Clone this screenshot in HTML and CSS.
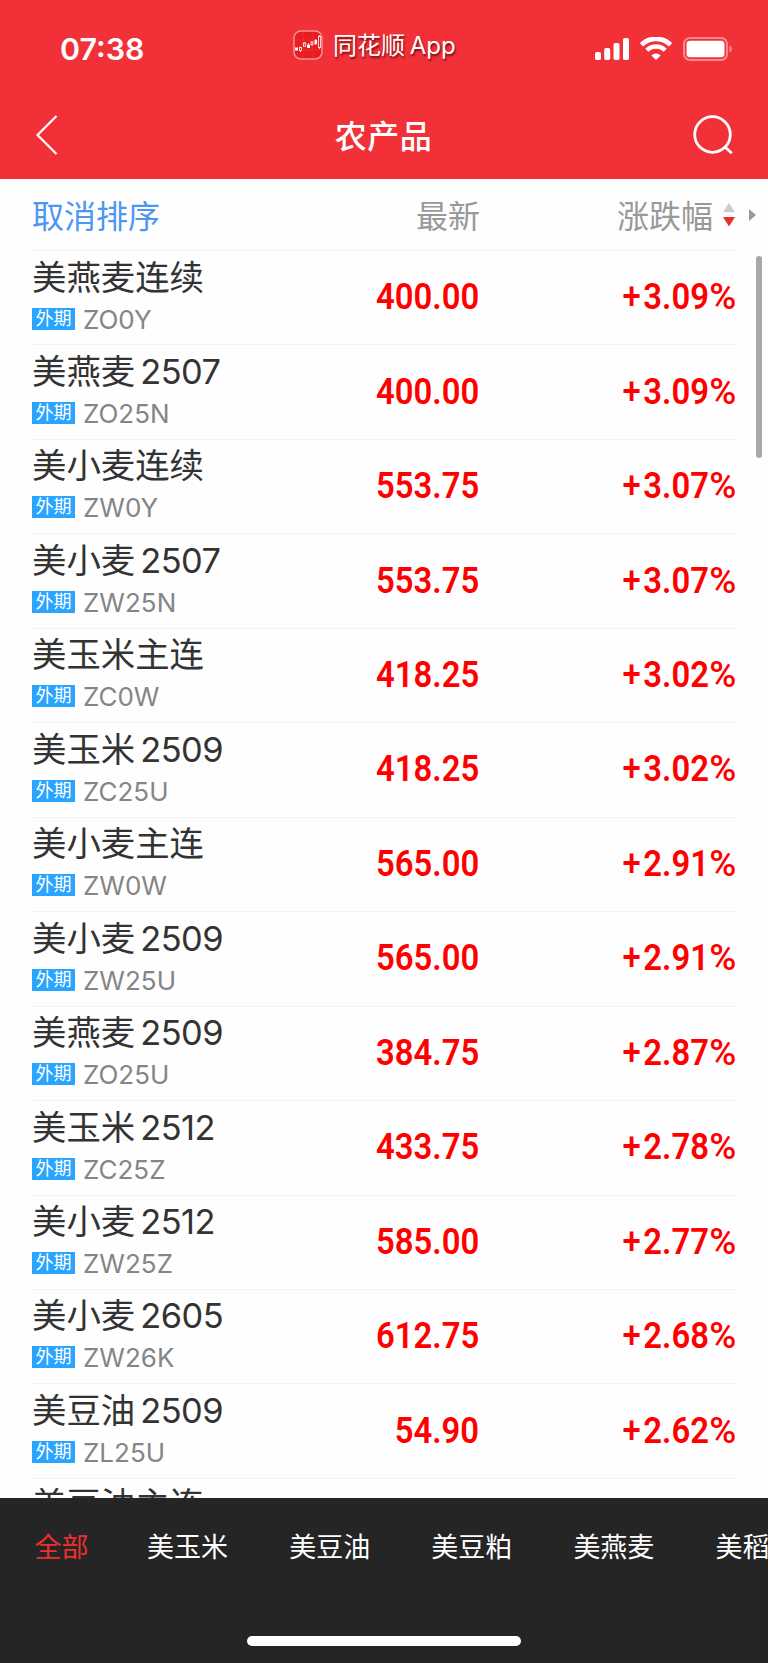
FILE: index.html
```html
<!DOCTYPE html>
<html lang="zh-CN">
<head>
    <meta charset="UTF-8">
    <title>农产品</title>
    <link rel="stylesheet" href="styles.css">
</head>
<body>
    <header class="header">
        <div class="status-bar">
            <span class="time">07:38</span>
            <div class="app-name">
                <svg class="app-logo" width="30" height="30" viewBox="0 0 30 30">
                    <rect x="1" y="1" width="28" height="28" rx="7" fill="#e81c22" stroke="#f79094" stroke-width="1.5"/>
                    <path d="M2 10h26M2 20h26M10 2v26M20 2v26" stroke="#f03a3e" stroke-width=".5"/>
                    <g fill="#fff">
                        <rect x="2" y="17.5" width="3" height="3"/>
                        <rect x="14" y="14.5" width="3" height="3.5"/>
                        <rect x="21.5" y="10" width="2.6" height="4"/>
                    </g>
                    <g fill="none" stroke="#fff" stroke-width=".8">
                        <rect x="6.5" y="17.5" width="2" height="3"/>
                        <rect x="10.5" y="13" width="2.2" height="3.2"/>
                        <rect x="18" y="12" width="2" height="2.5"/>
                        <rect x="25.4" y="6.5" width="2.2" height="11"/>
                        <path d="M7.5 16.5v1M7.5 20.5v1.5M11.6 12v1M15.5 13v1.5M19 11v1M19 14.5v1.5M22.8 9v6M26.5 5v1.5M26.5 17.5v1.5"/>
                    </g>
                </svg>
                <span class="app-title">同花顺 <span class="latin">App</span></span>
            </div>
            <div class="status-icons">
                <svg width="34" height="24" viewBox="0 0 34 24" fill="#fff">
                    <rect x="0" y="15" width="6" height="8" rx="1.8"/>
                    <rect x="9.2" y="11" width="6" height="12" rx="1.8"/>
                    <rect x="18.5" y="6" width="6" height="17" rx="1.8"/>
                    <rect x="28" y="1" width="6" height="22" rx="1.8"/>
                </svg>
                <svg width="32" height="24" viewBox="0 0 32 24" fill="none" stroke="#fff">
                    <path d="M1.5 7.8a20.8 20.8 0 0 1 29 0" stroke-width="4.8"/>
                    <path d="M6.8 13.3a13.1 13.1 0 0 1 18.4 0" stroke-width="4.4"/>
                    <path d="M11.3 18.4a6.7 6.7 0 0 1 9.4 0L16 23z" fill="#fff" stroke="none"/>
                </svg>
                <svg width="50" height="24" viewBox="0 0 50 24">
                    <rect x="1" y="1" width="43" height="22" rx="6" fill="none" stroke="#f88a8e" stroke-width="2"/>
                    <rect x="3.5" y="3.7" width="38" height="16.5" rx="3.5" fill="#fff"/>
                    <path d="M46.3 8.5c3.6 1 3.6 6 0 7z" fill="#f88a8e"/>
                </svg>
            </div>
        </div>
        <div class="nav-bar">
            <svg class="back" width="22" height="40" viewBox="0 0 22 40" fill="none" stroke="#fff" stroke-width="2.2">
                <path d="M20.5 1L1.5 20l19 19"/>
            </svg>
            <h1>农产品</h1>
            <svg class="search" width="40" height="40" viewBox="0 0 40 40" fill="none" stroke="#fff" stroke-width="2.8">
                <circle cx="19.5" cy="19.5" r="17.8"/>
                <path d="M31.5 31.5l7.3 6.8"/>
            </svg>
        </div>
    </header>

    <div class="table-head">
        <span class="cancel-sort">取消排序</span>
        <span class="col-price">最新</span>
        <span class="col-change">涨跌幅</span>
        <svg class="sort-arrows" width="12" height="24" viewBox="0 0 12 24">
            <path d="M6 0l6 9.3H0z" fill="#ccc"/>
            <path d="M6 23.5L0 14h12z" fill="#e93030"/>
        </svg>
        <svg class="more-arrow" width="7" height="12" viewBox="0 0 7 12">
            <path d="M0 0l7 6-7 6z" fill="#999"/>
        </svg>
    </div>

    <main class="list-wrap">
        <div class="list" id="list"></div>
        <div class="scrollbar"></div>
    </main>

    <footer class="footer">
        <nav class="tabs">
            <span class="active">全部</span>
            <span>美玉米</span>
            <span>美豆油</span>
            <span>美豆粕</span>
            <span>美燕麦</span>
            <span>美稻谷</span>
        </nav>
        <div class="home-indicator"></div>
    </footer>

    <script>
        const quotes = [
            ['美燕麦连续', '', 'ZO0Y', '400.00', '3.09'],
            ['美燕麦', '2507', 'ZO25N', '400.00', '3.09'],
            ['美小麦连续', '', 'ZW0Y', '553.75', '3.07'],
            ['美小麦', '2507', 'ZW25N', '553.75', '3.07'],
            ['美玉米主连', '', 'ZC0W', '418.25', '3.02'],
            ['美玉米', '2509', 'ZC25U', '418.25', '3.02'],
            ['美小麦主连', '', 'ZW0W', '565.00', '2.91'],
            ['美小麦', '2509', 'ZW25U', '565.00', '2.91'],
            ['美燕麦', '2509', 'ZO25U', '384.75', '2.87'],
            ['美玉米', '2512', 'ZC25Z', '433.75', '2.78'],
            ['美小麦', '2512', 'ZW25Z', '585.00', '2.77'],
            ['美小麦', '2605', 'ZW26K', '612.75', '2.68'],
            ['美豆油', '2509', 'ZL25U', '54.90', '2.62'],
            ['美豆油主连', '', '', '', '']
        ];

        document.getElementById('list').innerHTML = quotes.map(([name, month, code, price, change]) => `
            <div class="row">
                <div class="contract">
                    <div class="name">${name}${month ? `<span class="month">${month}</span>` : ''}</div>
                    ${code ? `<div class="meta"><span class="tag">外期</span><span class="code">${code}</span></div>` : ''}
                </div>
                <div class="price"><span class="num">${price}</span></div>
                <div class="change">${change ? `<span class="num"><span class="sign">+</span>${change}<span class="percent">%</span></span>` : ''}</div>
            </div>
        `).join('');
    </script>
</body>
</html>
```
FILE: styles.css
```css
* {
    box-sizing: border-box;
}

body {
    margin: 0;
    height: 1663px;
    overflow: hidden;
    display: flex;
    flex-direction: column;
    background: #fefefe;
    font-family: Inter, "Noto Sans CJK SC", sans-serif;
}

svg {
    display: block;
    flex: none;
}

.header {
    height: 179px;
    flex: none;
    background: #f23038;
    color: #fff;
}

.status-bar {
    height: 95px;
    padding: 0 35px 0 60px;
    display: grid;
    grid-template-columns: 233px 1fr auto;
    align-items: center;
}

.time {
    font-size: 30.4px;
    font-weight: 600;
    padding-top: 3px;
}

.app-name {
    display: flex;
    align-items: center;
    gap: 10px;
    padding-bottom: 6px;
}

.app-title {
    font-size: 24px;
    line-height: 30px;
    padding-top: 2px;
    text-shadow: 1px 2px 2px rgba(70, 0, 0, 0.7);
}

.app-title .latin {
    margin-left: -2px;
}

.status-icons {
    display: flex;
    align-items: center;
    gap: 11px;
    padding-top: 3px;
}

.nav-bar {
    height: 84px;
    padding: 0 35px 4px 36px;
    display: flex;
    align-items: center;
    justify-content: space-between;
}

.nav-bar h1 {
    margin: 4px 0 0 16px;
    font-size: 32px;
    font-weight: 500;
    line-height: 40px;
    letter-spacing: 0.5px;
}

.table-head {
    height: 72px;
    flex: none;
    margin-left: 32px;
    padding-right: 9px;
    display: flex;
    align-items: center;
    font-size: 32px;
    line-height: 40px;
    color: #999;
    background: linear-gradient(#f5f5f5, #f5f5f5) 0 100% / 704px 1px no-repeat;
}

.table-head span {
    padding-top: 3px;
}

.cancel-sort {
    width: 248px;
    color: #4d97f2;
}

.col-price {
    width: 200px;
    text-align: right;
}

.col-change {
    width: 233px;
    text-align: right;
}

.sort-arrows {
    margin-left: 10px;
}

.more-arrow {
    margin-left: 14px;
}

.list-wrap {
    flex: 1;
    min-height: 0;
    overflow: hidden;
    position: relative;
}

.list {
    margin: 0 32px;
}

.row {
    height: 94.46px;
    display: flex;
    align-items: center;
    border-bottom: 1px solid #f5f5f5;
}

.contract {
    width: 248px;
    align-self: flex-start;
    padding-top: 4.5px;
}

.name {
    font-size: 34.4px;
    line-height: 44px;
    color: #333;
    white-space: nowrap;
}

.month {
    margin-left: 5px;
    font-size: 34.4px;
    font-weight: 380;
    letter-spacing: -0.5px;
}

.meta {
    display: flex;
    align-items: center;
    margin-top: 8px;
    height: 24px;
}

.tag {
    width: 43px;
    height: 22px;
    margin-bottom: 2px;
    background: #29a4ff;
    color: #fff;
    font-size: 18px;
    line-height: 21px;
    text-align: center;
}

.code {
    margin-left: 8px;
    font-size: 26px;
    font-weight: 380;
    line-height: 24px;
    letter-spacing: 0;
    color: #858585;
}

.price {
    width: 199px;
    text-align: right;
}

.change {
    flex: 1;
    text-align: right;
}

/* condensed look for the quote figures */
.num {
    display: inline-block;
    margin-top: -1px;
    font-family: Roboto, sans-serif;
    font-size: 37px;
    font-weight: 600;
    line-height: 44px;
    color: #f00;
    transform: scaleX(0.888);
    transform-origin: right;
}

.change .num {
    margin-right: -1px;
}

.sign {
    margin-right: 3px;
    font-weight: 500;
}

.percent {
    display: inline-block;
    margin-left: 4px;
    font-weight: 500;
    transform: scaleX(1.12);
    transform-origin: right;
}

.scrollbar {
    position: absolute;
    top: 5px;
    right: 6px;
    width: 6px;
    height: 202px;
    border-radius: 3px;
    background: #a8a8a8;
}

.footer {
    height: 165px;
    flex: none;
    display: flex;
    flex-direction: column;
    justify-content: space-between;
    align-items: center;
    padding-bottom: 17px;
    background: #252525;
    overflow: hidden;
}

.tabs {
    width: 100%;
    height: 99px;
    padding: 1px 0 0 34.5px;
    display: flex;
    align-items: center;
    gap: 61.1px;
    font-size: 27px;
    line-height: 36px;
    color: #fff;
    white-space: nowrap;
}

.tabs .active {
    margin-right: -2.5px;
    color: #ee2f2f;
}

.home-indicator {
    width: 274px;
    height: 10px;
    border-radius: 5px;
    background: #fff;
}
```
